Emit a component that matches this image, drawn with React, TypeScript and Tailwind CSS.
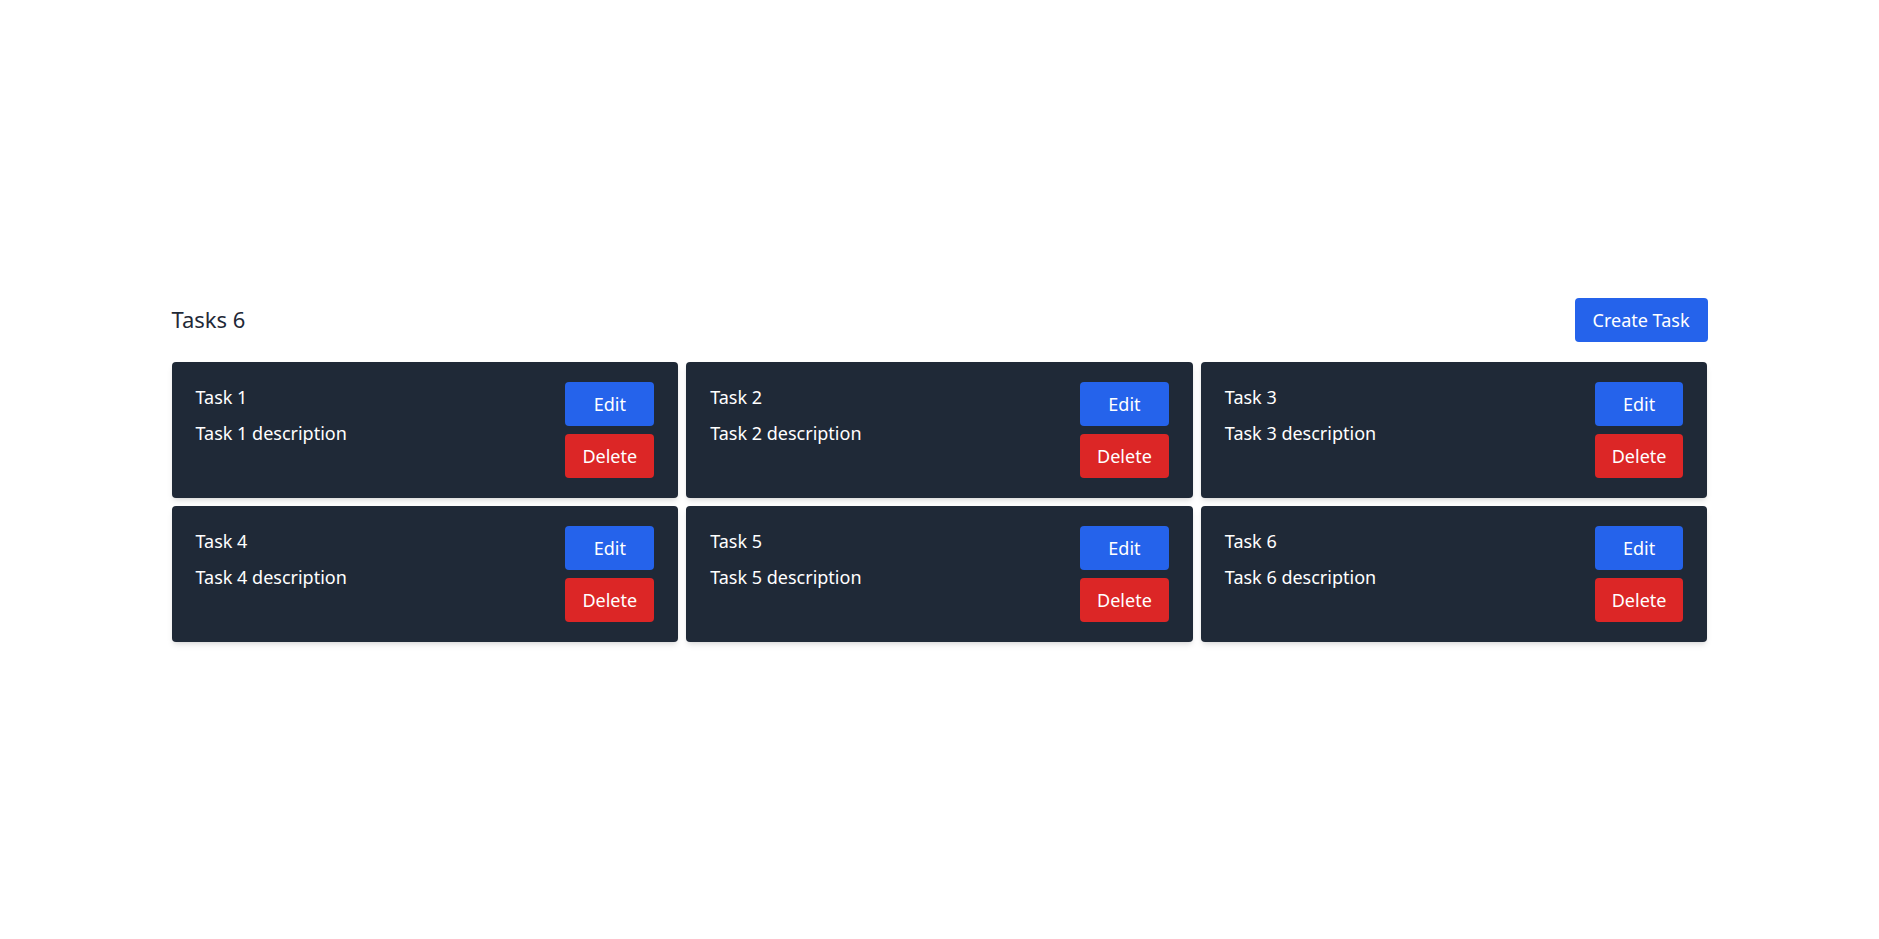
import React from 'react'

type Task = { id: number; title: string; description: string }

const tasks: Task[] = [1, 2, 3, 4, 5, 6].map((n) => ({
  id: n,
  title: `Task ${n}`,
  description: `Task ${n} description`,
}))

function TaskCard({ task }: { task: Task }) {
  return (
    <div className="flex items-start justify-between rounded bg-[#1f2937] px-6 py-5 text-white shadow-md">
      <div className="pt-px">
        <h3 className="text-lg leading-7">{task.title}</h3>
        <p className="mt-2 text-lg leading-7">{task.description}</p>
      </div>
      <div className="flex flex-col gap-2">
        <button type="button" className="rounded bg-[#2563eb] px-[17px] py-2 text-lg leading-7 text-white">
          Edit
        </button>
        <button type="button" className="rounded bg-[#dc2626] px-[17px] py-2 text-lg leading-7 text-white">
          Delete
        </button>
      </div>
    </div>
  )
}

export default function App() {
  return (
    <div className="flex min-h-screen items-center bg-white font-['Noto_Sans',sans-serif]">
      <div className="mx-auto w-full max-w-[1536px]">
        {/* header */}
        <div className="mb-5 flex items-center justify-between">
          <h1 className="text-[22px] text-[#1f2937]">Tasks {tasks.length}</h1>
          <button type="button" className="rounded bg-[#2563eb] px-[18px] py-2 text-lg leading-7 text-white">
            Create Task
          </button>
        </div>

        {/* task grid */}
        <div className="grid grid-cols-3 gap-2">
          {tasks.map((t) => (
            <TaskCard key={t.id} task={t} />
          ))}
        </div>
      </div>
    </div>
  )
}
